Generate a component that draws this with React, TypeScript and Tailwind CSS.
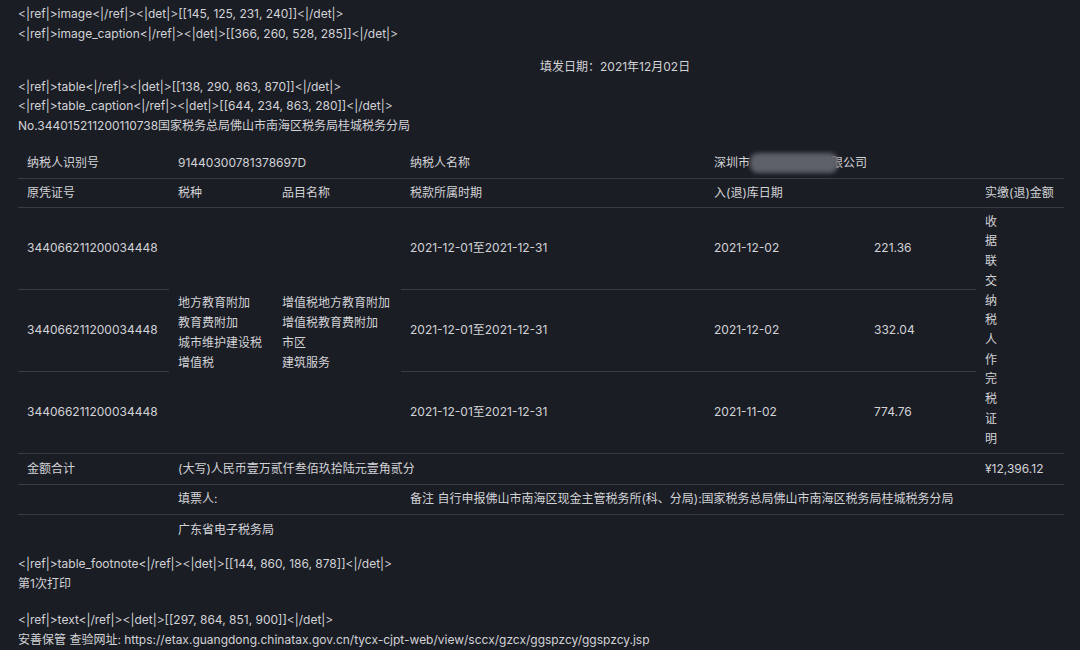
const rows = [
  { no: "344066211200034448", period: "2021-12-01至2021-12-31", date: "2021-12-02", amount: "221.36" },
  { no: "344066211200034448", period: "2021-12-01至2021-12-31", date: "2021-12-02", amount: "332.04" },
  { no: "344066211200034448", period: "2021-12-01至2021-12-31", date: "2021-11-02", amount: "774.76" },
];

const taxKinds = ["地方教育附加", "教育费附加", "城市维护建设税", "增值税"];
const items = ["增值税地方教育附加", "增值税教育费附加", "市区", "建筑服务"];
const stamp = "收据联交纳税人作完税证明".split("");

const line = "border-b border-[#393c45]";
const cell = "px-[9px] align-middle font-normal text-left";

export default function App() {
  return (
    <div className="min-h-screen bg-[#1b1d25] text-[#d2d3d6] text-[12px] leading-[19.5px] px-[18px] pt-[4px] font-['Inter','Noto_Sans_CJK_SC',sans-serif]">
      <div>{"<|ref|>image<|/ref|><|det|>[[145, 125, 231, 240]]<|/det|>"}</div>
      <div>{"<|ref|>image_caption<|/ref|><|det|>[[366, 260, 528, 285]]<|/det|>"}</div>

      <div className="mt-[14px] pl-[522px]">填发日期：2021年12月02日</div>
      <div>{"<|ref|>table<|/ref|><|det|>[[138, 290, 863, 870]]<|/det|>"}</div>
      <div>{"<|ref|>table_caption<|/ref|><|det|>[[644, 234, 863, 280]]<|/det|>"}</div>
      <div>No.344015211200110738国家税务总局佛山市南海区税务局桂城税务分局</div>

      <table className="mt-[13px] w-[1046px] border-collapse table-fixed">
        <colgroup>
          <col className="w-[151px]" />
          <col className="w-[104px]" />
          <col className="w-[128px]" />
          <col className="w-[304px]" />
          <col className="w-[160px]" />
          <col className="w-[111px]" />
          <col className="w-[88px]" />
        </colgroup>
        <tbody>
          <tr className={`h-[30px] ${line}`}>
            <td className={cell}>纳税人识别号</td>
            <td className={cell} colSpan={2}>91440300781378697D</td>
            <td className={cell}>纳税人名称</td>
            <td className={cell} colSpan={2}>
              <span className="relative whitespace-nowrap">
                深圳市<span className="inline-block w-[81px]" />限公司
                <span className="absolute left-[36px] top-[-2px] h-[20px] w-[88px] rounded-[8px] bg-[#5d6068] blur-[2px]" />
              </span>
            </td>
            <td className={cell}></td>
          </tr>
          <tr className={`h-[29px] ${line}`}>
            <th className={cell}>原凭证号</th>
            <th className={cell}>税种</th>
            <th className={cell}>品目名称</th>
            <th className={cell}>税款所属时期</th>
            <th className={cell}>入(退)库日期</th>
            <th className={cell}></th>
            <th className={`${cell} whitespace-nowrap`}>实缴(退)金额</th>
          </tr>
          {rows.map((r, i) => (
            <tr key={i} className="h-[82px]">
              <td className={`${cell} ${line}`}>{r.no}</td>
              {i === 0 && (
                <>
                  <td className={`${cell} ${line} leading-[20px] pt-[6px]`} rowSpan={3}>
                    {taxKinds.map((t) => (
                      <div key={t} className="whitespace-nowrap">{t}</div>
                    ))}
                  </td>
                  <td className={`${cell} ${line} leading-[20px] pt-[6px]`} rowSpan={3}>
                    {items.map((t) => (
                      <div key={t} className="whitespace-nowrap">{t}</div>
                    ))}
                  </td>
                </>
              )}
              <td className={`${cell} ${line} whitespace-nowrap`}>{r.period}</td>
              <td className={`${cell} ${line}`}>{r.date}</td>
              <td className={`${cell} ${line}`}>{r.amount}</td>
              {i === 0 && (
                <td className={`${cell} ${line} leading-[19.7px]`} rowSpan={3}>
                  {stamp.map((c, k) => (
                    <div key={k}>{c}</div>
                  ))}
                </td>
              )}
            </tr>
          ))}
          <tr className={`h-[31px] ${line}`}>
            <td className={cell}>金额合计</td>
            <td className={cell} colSpan={5}>(大写)人民币壹万贰仟叁佰玖拾陆元壹角贰分</td>
            <td className={cell}>¥12,396.12</td>
          </tr>
          <tr className={`h-[30px] ${line}`}>
            <td className={cell}></td>
            <td className={cell} colSpan={2}>填票人:</td>
            <td className={`${cell} whitespace-nowrap`} colSpan={4}>
              备注 自行申报佛山市南海区现金主管税务所(科、分局):国家税务总局佛山市南海区税务局桂城税务分局
            </td>
          </tr>
          <tr className="h-[30px]">
            <td className={cell}></td>
            <td className={cell} colSpan={6}>广东省电子税务局</td>
          </tr>
        </tbody>
      </table>

      <div className="mt-[10px]">{"<|ref|>table_footnote<|/ref|><|det|>[[144, 860, 186, 878]]<|/det|>"}</div>
      <div>第1次打印</div>
      <div className="mt-[17px]">{"<|ref|>text<|/ref|><|det|>[[297, 864, 851, 900]]<|/det|>"}</div>
      <div>安善保管 查验网址: https://etax.guangdong.chinatax.gov.cn/tycx-cjpt-web/view/sccx/gzcx/ggspzcy/ggspzcy.jsp</div>
    </div>
  );
}
